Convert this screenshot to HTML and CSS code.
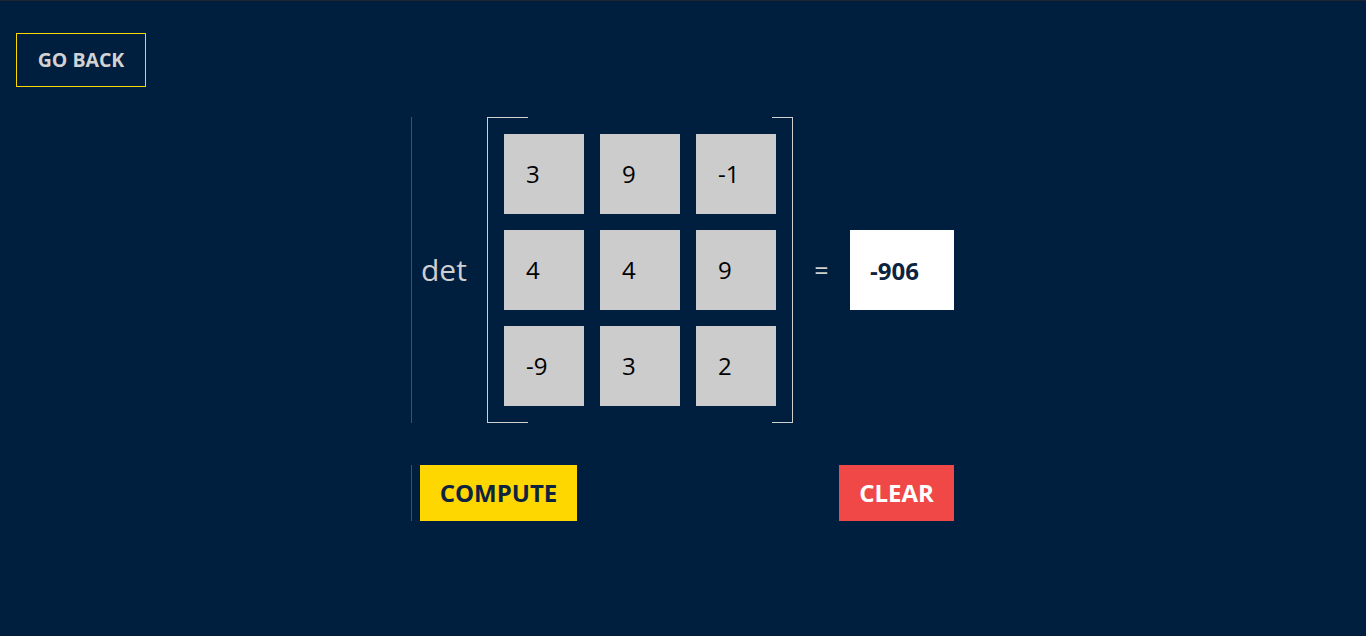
FILE: index.html
```html
<!DOCTYPE html>
<html>
<head>
<meta charset="utf-8">
<link rel="stylesheet" href="styles.css">
</head>
<body>
<div class="page">
  <button class="back">GO BACK</button>
  <div class="calc">
    <div class="row-main">
      <div class="det">det</div>
      <div class="matrix">
        <input class="cell" value="3">
        <input class="cell" value="9">
        <input class="cell" value="-1">
        <input class="cell" value="4">
        <input class="cell" value="4">
        <input class="cell" value="9">
        <input class="cell" value="-9">
        <input class="cell" value="3">
        <input class="cell" value="2">
      </div>
      <div class="equals">=</div>
      <div class="result">-906</div>
    </div>
    <div class="row-actions">
      <button class="btn compute">COMPUTE</button>
      <button class="btn clear">CLEAR</button>
    </div>
  </div>
</div>
</body>
</html>
```

FILE: styles.css
```css
* { box-sizing: border-box; }
html, body { margin: 0; padding: 0; }
body {
  background: #001e3d;
  border-top: 1px solid #1d2630;
  min-height: 636px;
  font-family: "Open Sans", "Noto Sans", sans-serif;
}
.page {
  padding: 32px 16px 0;
}
.back {
  display: block;
  width: 130px;
  height: 54px;
  background: transparent;
  border: 1px solid #ffd700;
  color: #d2d2d2;
  font-family: "Open Sans", sans-serif;
  font-weight: 700;
  font-size: 19.5px;
  padding: 0 0 2px;
  margin: 0;
}
.calc {
  width: 544px;
  margin: 30px auto 0;
}
.row-main {
  display: flex;
  align-items: center;
  border-left: 1px solid #3a5272;
  height: 306px;
}
.det {
  width: 75px;
  padding-left: 9px;
  color: #cfcfcf;
  font-size: 30px;
  line-height: 1;
}
.matrix {
  width: 306px;
  height: 306px;
  padding: 17px 16px;
  display: grid;
  grid-template-columns: repeat(3, 80px);
  grid-template-rows: repeat(3, 80px);
  gap: 16px;
  border-left: 1px solid #d0d0d0;
  border-right: 1px solid #d0d0d0;
  background:
    linear-gradient(#d0d0d0, #d0d0d0) left top / 40px 1px no-repeat,
    linear-gradient(#d0d0d0, #d0d0d0) left bottom / 40px 1px no-repeat,
    linear-gradient(#d0d0d0, #d0d0d0) right top / 20px 1px no-repeat,
    linear-gradient(#d0d0d0, #d0d0d0) right bottom / 20px 1px no-repeat;
}
.cell {
  width: 80px;
  height: 80px;
  background: #cccccc;
  border: none;
  margin: 0;
  padding: 0 0 2px 22px;
  font-family: "Open Sans", sans-serif;
  font-size: 24px;
  color: #000;
  outline: none;
}
.equals {
  width: 57px;
  text-align: center;
  color: #cfcfcf;
  font-size: 25px;
}
.result {
  width: 104px;
  height: 80px;
  background: #ffffff;
  display: flex;
  align-items: center;
  padding-left: 20px;
  color: #0d2340;
  font-weight: 700;
  font-size: 24px;
}
.row-actions {
  display: flex;
  justify-content: space-between;
  border-left: 1px solid #3a5272;
  padding-left: 8px;
  padding-right: 1px;
  margin-top: 42px;
}
.btn {
  height: 56px;
  border: none;
  margin: 0;
  font-family: "Open Sans", sans-serif;
  font-weight: 700;
  font-size: 24px;
  padding: 0 0 2px;
}
.compute {
  width: 157px;
  background: #ffd700;
  color: #0d2340;
}
.clear {
  width: 115px;
  background: #f04747;
  color: #ffffff;
}
```
